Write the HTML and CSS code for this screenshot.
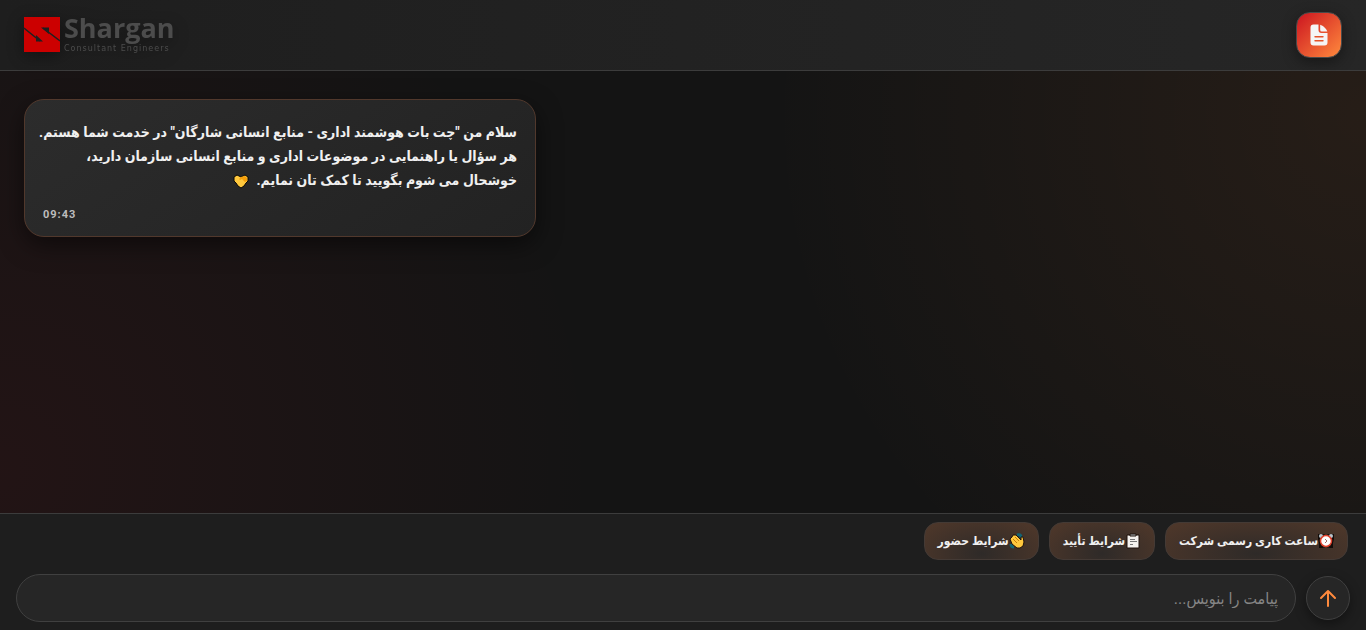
FILE: index.html
```
<!DOCTYPE html>
<html lang="fa" dir="rtl">

<head>
    <meta charset="UTF-8">
    <title>Shargan</title>
    <meta name="viewport" content="width=device-width, initial-scale=1">
    <link rel="stylesheet" href="styles.css">
</head>

<body>
    <header class="header">
        <button type="button" class="doc-btn" aria-label="اسناد">
            <svg viewBox="0 0 24 24" width="24" height="24">
                <path fill="#f5f5f5" d="M6.500 1.500H11.500V7A3 3 0 0 0 14.500 10H20.500v9.500a3 3 0 0 1-3 3h-11a3 3 0 0 1-3-3v-15a3 3 0 0 1 3-3z" />
                <path fill="#f5f5f5" d="M13.200 1.800C16 2.600 19.600 5.800 20.300 8.600H14.700A1.500 1.500 0 0 1 13.200 7.100z" />
                <path stroke="#e5532a" stroke-width="1.400" stroke-linecap="round" d="M8 13.700h8M8 17.700h8" />
            </svg>
        </button>
        <a href="#" class="logo" dir="ltr">
            <svg viewBox="0 0 36 35" width="36" height="35">
                <path fill="#cc0000" d="M0 0h36v35H0z" />
                <path fill="none" stroke="#1f1f1f" stroke-width="1.400" d="M0 11l16 13M19 11l17 13" />
                <path fill="#1f1f1f" d="M12 18v6.500h7zM25 17v-6.500h-8z" />
            </svg>
            <span class="logo-text">
                <span class="logo-name">Shargan</span>
                <span class="logo-sub">Consultant Engineers</span>
            </span>
        </a>
    </header>

    <main class="chat">
        <div class="message">
            <p class="message-text">سلام من "چت بات هوشمند اداری - منابع انسانی شارگان" در خدمت شما هستم.<br>
                هر سؤال یا راهنمایی در موضوعات اداری و منابع انسانی سازمان دارید،<br>
                خوشحال می شوم بگویید تا کمک تان نمایم.
                <svg class="emoji" viewBox="0 0 16 16" width="16" height="16" aria-hidden="true">
                    <path fill="#ffc83d" stroke="#0b0805" d="M1 4l3-2 4 2 4-2 3 2v4l-2 2-2 3-3 2-3-2-2-3-2-2z" />
                    <path fill="#f59f0b" d="M8 4l4-1 2 2v3l-2 1-3-3-2 1-1-1z" />
                </svg>
            </p>
            <time class="message-time" dir="ltr">09:43</time>
        </div>
    </main>

    <footer class="footer">
        <div class="chips">
            <button type="button" class="chip">
                <svg class="emoji" viewBox="0 0 16 16" width="16" height="16" aria-hidden="true">
                    <path fill="#120c09" d="M0 1h5l3 1 3-1h5v5l-1 4v5h-3l-4-1-4 1H1v-5L0 6z" />
                    <circle cx="3" cy="3" r="2" fill="#b9c4cc" />
                    <circle cx="13" cy="3" r="2" fill="#b9c4cc" />
                    <circle cx="8" cy="8" r="5.500" fill="#fff" stroke="#e0402b" stroke-width="1.500" />
                    <path fill="none" stroke="#a66a64" d="M7 6l2 2-2 2" />
                </svg><span>ساعت کاری رسمی شرکت</span>
            </button>
            <button type="button" class="chip">
                <svg class="emoji" viewBox="0 0 16 16" width="16" height="16" aria-hidden="true">
                    <path fill="#f5f2ef" stroke="#20130c" d="M2 2h12v13H2z" />
                    <path fill="#aeb6ba" stroke="#20130c" d="M5 1h6v2H5z" />
                    <path fill="none" stroke="#777" d="M5 6.500h5M5 8.500h7M5 11.500h3" />
                </svg><span>شرایط تأیید</span>
            </button>
            <button type="button" class="chip">
                <svg class="emoji" viewBox="0 0 16 16" width="16" height="16" aria-hidden="true">
                    <path fill="none" stroke="#126575" stroke-width="3" d="M8 2c3-1 4 0 4 3M2 11c0 2 1 3 3 3" />
                    <path fill="#ffc83d" stroke="#20130c" d="M1 6l2-2 1-2 3 0 5 5 0-3 2 0 1 5-1 4-3 2H8L3 11z" />
                    <path fill="none" stroke="#c67c0b" d="M4 6l4 4M6 4l4 4" />
                </svg><span>شرایط حضور</span>
            </button>
        </div>
        <form class="composer">
            <button type="submit" class="send-btn" aria-label="ارسال">
                <svg viewBox="0 0 20 20" width="20" height="20">
                    <path fill="none" stroke="#ff8a3d" stroke-width="2" stroke-linecap="round" stroke-linejoin="round" d="M10 18V3M3 10l7-7 7 7" />
                </svg>
            </button>
            <input type="text" class="message-input" placeholder="پیامت را بنویس..." aria-label="پیام">
        </form>
    </footer>
</body>

</html>
```
FILE: styles.css
```
* {
    box-sizing: border-box;
}

body {
    margin: 0;
    min-height: 100vh;
    display: flex;
    flex-direction: column;
    font-family: Roboto, "DejaVu Sans Condensed", "DejaVu Sans", sans-serif;
    color: #f0f0f0;
    background: #141414;
}

button, input {
    font-family: inherit;
    color: inherit;
}

.header {
    display: flex;
    align-items: center;
    justify-content: space-between;
    padding: 12px 24px;
    background: linear-gradient(90deg, #1e1e1e, #262626);
    border-bottom: 1px solid #3c3c3c;
}

.doc-btn {
    display: flex;
    align-items: center;
    justify-content: center;
    width: 46px;
    height: 46px;
    padding: 0;
    border: 1px solid #4a4a4a;
    border-radius: 14px;
    background: linear-gradient(135deg, #cc1420, #ff8a3d);
    box-shadow: 0 4px 14px rgba(0, 0, 0, 0.4);
}

.logo {
    display: flex;
    align-items: center;
    gap: 4px;
    padding-bottom: 2px;
    color: #4c4c4c;
    text-decoration: none;
    filter: drop-shadow(0 4px 8px rgba(0, 0, 0, 0.4));
}

.logo-text {
    display: flex;
    flex-direction: column;
    gap: 4px;
    padding-top: 2px;
}

.logo-name {
    font: 700 27px/24px "Open Sans", sans-serif;
}

.logo-sub {
    font: 8px/10px "DejaVu Sans", sans-serif;
    letter-spacing: 1px;
}

/* chat area */
.chat {
    flex: 1;
    padding: 28px 24px;
    background:
        radial-gradient(circle at 0% 90%, rgba(204, 20, 32, 0.08), transparent 42%),
        radial-gradient(circle at 100% 10%, rgba(255, 138, 61, 0.08), transparent 42%),
        #141414;
}

.message {
    width: 512px;
    max-width: 100%;
    margin-right: auto;
    padding: 20px 18px 12px 12px;
    border: 1px solid #51382c;
    border-radius: 20px;
    background: linear-gradient(145deg, #2c2c2c, #222);
    box-shadow: 0 8px 24px rgba(0, 0, 0, 0.5);
}

.message-text {
    margin: 0 0 14px;
    font-size: 14px;
    font-weight: 700;
    line-height: 24px;
}

.message-text .emoji {
    margin-right: 4px;
}

.message-time {
    display: block;
    padding-left: 6px;
    font-size: 11px;
    font-weight: 700;
    line-height: 18px;
    letter-spacing: 1px;
    color: #bdbdbd;
}

.emoji {
    vertical-align: middle;
}

/* bottom bar */
.footer {
    padding: 8px 16px;
    background: #1e1e1e;
    border-top: 1px solid #3c3c3c;
}

.chips {
    display: flex;
    flex-wrap: wrap;
    gap: 10px;
    padding: 0 2px;
    margin-bottom: 14px;
}

.chip {
    display: flex;
    align-items: center;
    height: 38px;
    padding: 0 13px;
    border: 1px solid #443a35;
    border-radius: 14px;
    font-size: 12px;
    font-weight: 700;
    background: radial-gradient(ellipse at 50% 85%, #2e2a28, #50382a);
}

.composer {
    display: flex;
    align-items: center;
    gap: 10px;
}

.send-btn {
    display: flex;
    align-items: center;
    justify-content: center;
    width: 44px;
    height: 44px;
    padding: 0;
    border: 1px solid #404040;
    border-radius: 50%;
    background: #262626;
    box-shadow: 0 4px 12px rgba(0, 0, 0, 0.4);
}

.message-input {
    flex: 1;
    min-width: 0;
    height: 48px;
    padding: 0 17px;
    border: 1px solid #404040;
    border-radius: 24px;
    font-size: 16px;
    background: #262626;
}

.message-input::placeholder {
    color: #858585;
}
```
